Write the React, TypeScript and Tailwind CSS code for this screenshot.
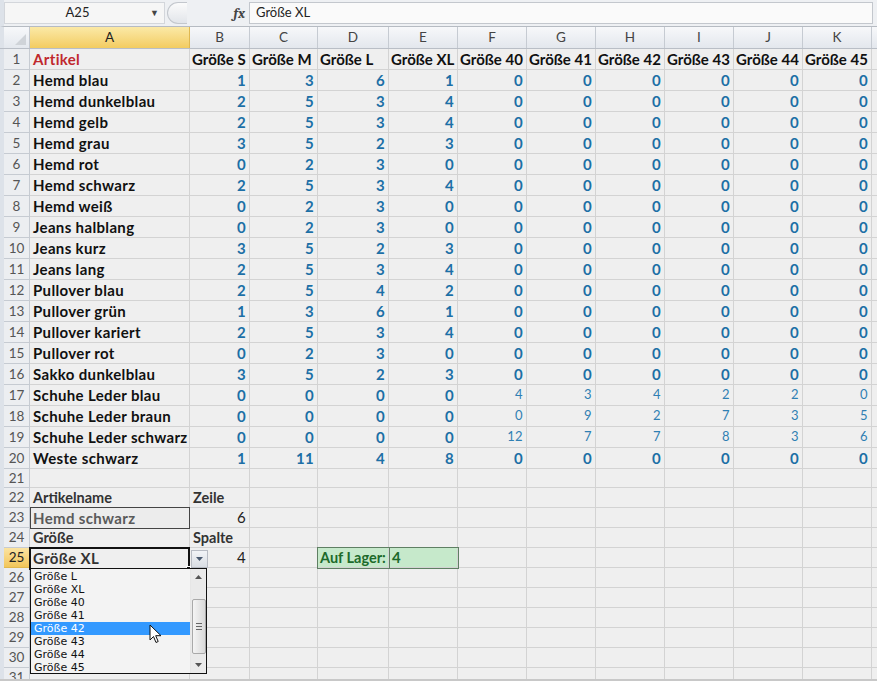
import React from "react";

type Spec = { t?: string | number; kind?: "txt" | "num" | "numl" | "red" | "head" | "label" | "plain" };

const colLetters = ["A", "B", "C", "D", "E", "F", "G", "H", "I", "J", "K"];
const sizes = ["Größe S", "Größe M", "Größe L", "Größe XL", "Größe 40", "Größe 41", "Größe 42", "Größe 43", "Größe 44", "Größe 45"];

const articles: [string, number[]][] = [
  ["Hemd blau", [1, 3, 6, 1, 0, 0, 0, 0, 0, 0]],
  ["Hemd dunkelblau", [2, 5, 3, 4, 0, 0, 0, 0, 0, 0]],
  ["Hemd gelb", [2, 5, 3, 4, 0, 0, 0, 0, 0, 0]],
  ["Hemd grau", [3, 5, 2, 3, 0, 0, 0, 0, 0, 0]],
  ["Hemd rot", [0, 2, 3, 0, 0, 0, 0, 0, 0, 0]],
  ["Hemd schwarz", [2, 5, 3, 4, 0, 0, 0, 0, 0, 0]],
  ["Hemd weiß", [0, 2, 3, 0, 0, 0, 0, 0, 0, 0]],
  ["Jeans halblang", [0, 2, 3, 0, 0, 0, 0, 0, 0, 0]],
  ["Jeans kurz", [3, 5, 2, 3, 0, 0, 0, 0, 0, 0]],
  ["Jeans lang", [2, 5, 3, 4, 0, 0, 0, 0, 0, 0]],
  ["Pullover blau", [2, 5, 4, 2, 0, 0, 0, 0, 0, 0]],
  ["Pullover grün", [1, 3, 6, 1, 0, 0, 0, 0, 0, 0]],
  ["Pullover kariert", [2, 5, 3, 4, 0, 0, 0, 0, 0, 0]],
  ["Pullover rot", [0, 2, 3, 0, 0, 0, 0, 0, 0, 0]],
  ["Sakko dunkelblau", [3, 5, 2, 3, 0, 0, 0, 0, 0, 0]],
  ["Schuhe Leder blau", [0, 0, 0, 0, 4, 3, 4, 2, 2, 0]],
  ["Schuhe Leder braun", [0, 0, 0, 0, 0, 9, 2, 7, 3, 5]],
  ["Schuhe Leder schwarz", [0, 0, 0, 0, 12, 7, 7, 8, 3, 6]],
  ["Weste schwarz", [1, 11, 4, 8, 0, 0, 0, 0, 0, 0]],
];

const dropItems = ["Größe L", "Größe XL", "Größe 40", "Größe 41", "Größe 42", "Größe 43", "Größe 44", "Größe 45"];

function buildRows(): Spec[][] {
  const rows: Spec[][] = [];
  rows.push([{ t: "Artikel", kind: "red" }, ...sizes.map((s) => ({ t: s, kind: "head" as const }))]);
  articles.forEach(([name, vals], i) => {
    const light = i >= 15 && i <= 17;
    rows.push([
      { t: name, kind: "txt" },
      ...vals.map((v, j) => ({ t: v, kind: light && j >= 4 ? ("numl" as const) : ("num" as const) })),
    ]);
  });
  rows.push([]); // 21
  rows.push([{ t: "Artikelname", kind: "label" }, { t: "Zeile", kind: "label" }]); // 22
  rows.push([{}, { t: 6, kind: "plain" }]); // 23
  rows.push([{ t: "Größe", kind: "label" }, { t: "Spalte", kind: "label" }]); // 24
  rows.push([{}, { t: 4, kind: "plain" }]); // 25
  for (let i = 26; i <= 31; i++) rows.push([]);
  return rows;
}

function CellContent({ s }: { s?: Spec }) {
  if (!s || s.t === undefined) return null;
  switch (s.kind) {
    case "red":
      return <span className="pl-[3px] font-bold text-[#c0282d]">{s.t}</span>;
    case "txt":
      return <span className="pl-[3px] font-bold text-[#111]">{s.t}</span>;
    case "head":
      return <span className="pl-[2px] font-bold text-[#111] whitespace-nowrap tracking-normal">{s.t}</span>;
    case "label":
      return <span className="pl-[3px] font-bold text-[14.5px] tracking-normal text-[#333]">{s.t}</span>;
    case "num":
      return <span className="ml-auto pr-[3px] font-bold text-[#1c6fa6]">{s.t}</span>;
    case "numl":
      return <span className="ml-auto pr-[3px] text-[13px] text-[#2f7fb3]">{s.t}</span>;
    case "plain":
      return <span className="ml-auto pr-[3px] text-[#222]">{s.t}</span>;
    default:
      return null;
  }
}

export default function App() {
  const rows = buildRows();
  return (
    <div
      className="relative w-[877px] h-[681px] overflow-hidden bg-[#efefef] text-[15px] tracking-[0.35px]"
      style={{ fontFamily: "Lato, 'Open Sans', sans-serif" }}
    >
      {/* formula bar */}
      <div className="flex h-[27px] items-center bg-[#eef0f3] border-b border-[#b6bbc2] border-l-[4px] border-l-[#dde2e9] tracking-normal">
        <div className="flex h-[22px] w-[161px] items-center border border-[#d3d6db] bg-[#f6f6f6]">
          <span className="flex-1 text-center text-[13px] text-[#222]">A25</span>
          <span className="w-[14px] text-[9px] text-[#444]">▼</span>
        </div>
        <div className="ml-[2px] h-[22px] w-[20px] rounded-l-full border border-r-0 border-[#c3c7cd] bg-gradient-to-b from-[#fbfbfb] to-[#e2e5ea]" />
        <div className="flex h-[22px] w-[62px] items-center justify-end pr-[4px]">
          <span className="font-serif text-[14px] font-bold italic text-[#444]">fx</span>
        </div>
        <div className="flex h-[22px] flex-1 items-center border border-[#c3c7cd] bg-[#fafafa] pl-[6px] text-[13px] text-[#222] mr-[4px]">
          Größe XL
        </div>
      </div>

      {/* column header */}
      <div className="grid h-[22px] grid-cols-[4px_26px_160px_60px_68px_71px_69px_69px_69px_69px_69px_69px_69px_5px] border-b border-[#b9bec6] tracking-normal">
        <div className="bg-[#dde2e9]" />
        <div className="relative border-r border-[#c2c7ce] bg-gradient-to-b from-[#f7f8fa] to-[#e4e8ee]">
          <svg className="absolute bottom-[3px] right-[3px]" width="11" height="11" viewBox="0 0 11 11">
            <path d="M11 0v11H0z" fill="#cfd3d8" />
          </svg>
        </div>
        {colLetters.map((c, i) => (
          <div
            key={c}
            className={
              "flex items-center justify-center border-r text-[13.5px] " +
              (i === 0
                ? "border-[#e0b850] bg-gradient-to-b from-[#fbe9a6] to-[#f3cc60] text-[#222]"
                : "border-[#c6cbd2] bg-gradient-to-b from-[#f7f8fa] to-[#e3e7ed] text-[#444]")
            }
          >
            {c}
          </div>
        ))}
        <div className="bg-gradient-to-b from-[#f7f8fa] to-[#e3e7ed]" />
      </div>

      {/* body */}
      <div className="grid grid-rows-[repeat(20,21px)_19px_repeat(11,20px)] grid-cols-[4px_26px_160px_60px_68px_71px_69px_69px_69px_69px_69px_69px_69px_5px]">
        {rows.map((r, ri) => {
          const n = ri + 1;
          const sel = n === 25;
          return (
            <React.Fragment key={n}>
              <div className="bg-[#dde2e9]" />
              <div
                className={
                  "flex items-center justify-center border-b border-r text-[13.5px] tracking-normal " +
                  (sel
                    ? "border-[#e0b850] bg-gradient-to-b from-[#fbe3a0] to-[#f2c659] text-[#222]"
                    : "border-[#c6cbd2] bg-[#eceef1] text-[#555]")
                }
              >
                {n}
              </div>
              {Array.from({ length: 11 }).map((_, ci) => {
                let extra = "";
                if (n === 25 && (ci === 3 || ci === 4)) extra = " bg-[#c6e9cb] border-[#6a8a6e]";
                return (
                  <div
                    key={ci}
                    className={"flex items-center overflow-visible whitespace-nowrap border-b border-r border-[#d3d3d3]" + extra}
                  >
                    <CellContent s={r[ci]} />
                    {n === 25 && ci === 3 && (
                      <span className="pl-[2px] font-bold text-[14.5px] tracking-normal text-[#1d6a2a]">Auf Lager:</span>
                    )}
                    {n === 25 && ci === 4 && <span className="pl-[3px] font-bold text-[#1d6a2a]">4</span>}
                  </div>
                );
              })}
              <div className="border-b border-[#d3d3d3]" />
            </React.Fragment>
          );
        })}
      </div>

      {/* green cells outline */}
      <div className="absolute left-[317px] top-[547px] h-[22px] w-[142px] border border-[#5f7f63] pointer-events-none">
        <div className="ml-[71px] h-full w-px bg-[#5f7f63]" />
      </div>

      {/* A23 boxed cell */}
      <div className="absolute left-[30px] top-[507px] flex h-[22px] w-[160px] items-center border border-[#444] bg-[#ececec]">
        <span className="pl-[2px] font-bold text-[#5a5a5a]">Hemd schwarz</span>
      </div>

      {/* A25 active cell */}
      <div className="absolute left-[29px] top-[547px] flex h-[23px] w-[161px] items-center border-2 border-[#111] bg-[#efefef]">
        <span className="pl-[2px] font-bold text-[#333]">Größe XL</span>
        <div className="absolute -bottom-[3px] -right-[3px] h-[5px] w-[5px] bg-[#111] border border-white" />
      </div>

      {/* dropdown button */}
      <div className="absolute left-[191px] top-[550px] flex h-[18px] w-[17px] items-center justify-center border border-[#b8bcc4] bg-gradient-to-b from-[#f2f4f7] to-[#d9dde3]">
        <svg width="7" height="4" viewBox="0 0 7 4">
          <path d="M0 0h7L3.5 4z" fill="#4a5a70" />
        </svg>
      </div>

      {/* dropdown list */}
      <div
        className="absolute left-[30px] top-[568px] flex h-[106px] w-[177px] border border-[#111] bg-[#f3f3f3] text-[11px] text-[#111] tracking-normal"
        style={{ fontFamily: "'DejaVu Sans', 'Liberation Sans', sans-serif" }}
      >
        <div className="flex-1 pt-[1px]">
          {dropItems.map((it) => (
            <div
              key={it}
              className={"flex h-[13px] items-center pl-[3px] leading-none " + (it === "Größe 42" ? "bg-[#3399ff] text-white" : "")}
            >
              {it}
            </div>
          ))}
        </div>
        <div className="flex w-[16px] flex-col items-center border-l border-[#e6e6e6] bg-[#eaeaea]">
          <div className="flex h-[16px] items-center justify-center">
            <svg width="7" height="4" viewBox="0 0 7 4">
              <path d="M0 4h7L3.5 0z" fill="#555" />
            </svg>
          </div>
          <div className="mt-[14px] flex h-[55px] w-[14px] items-center justify-center rounded-[2px] border border-[#a9a9a9] bg-gradient-to-r from-[#f4f4f4] to-[#d9d9d9]">
            <div className="flex flex-col gap-[2px]">
              <div className="h-px w-[6px] bg-[#666]" />
              <div className="h-px w-[6px] bg-[#666]" />
              <div className="h-px w-[6px] bg-[#666]" />
            </div>
          </div>
          <div className="mt-auto flex h-[16px] items-center justify-center">
            <svg width="7" height="4" viewBox="0 0 7 4">
              <path d="M0 0h7L3.5 4z" fill="#555" />
            </svg>
          </div>
        </div>
      </div>

      {/* mouse cursor */}
      <svg className="absolute left-[149px] top-[624px]" width="13" height="20" viewBox="0 0 13 20">
        <path d="M1 1v15l3.5-3.5 2.5 6 2.2-1-2.5-5.8H12z" fill="#fff" stroke="#111" strokeWidth="1" strokeLinejoin="round" />
      </svg>

      {/* bottom line */}
      <div className="absolute bottom-0 left-0 h-[2px] w-full bg-[#c8c8c8]" />
    </div>
  );
}
